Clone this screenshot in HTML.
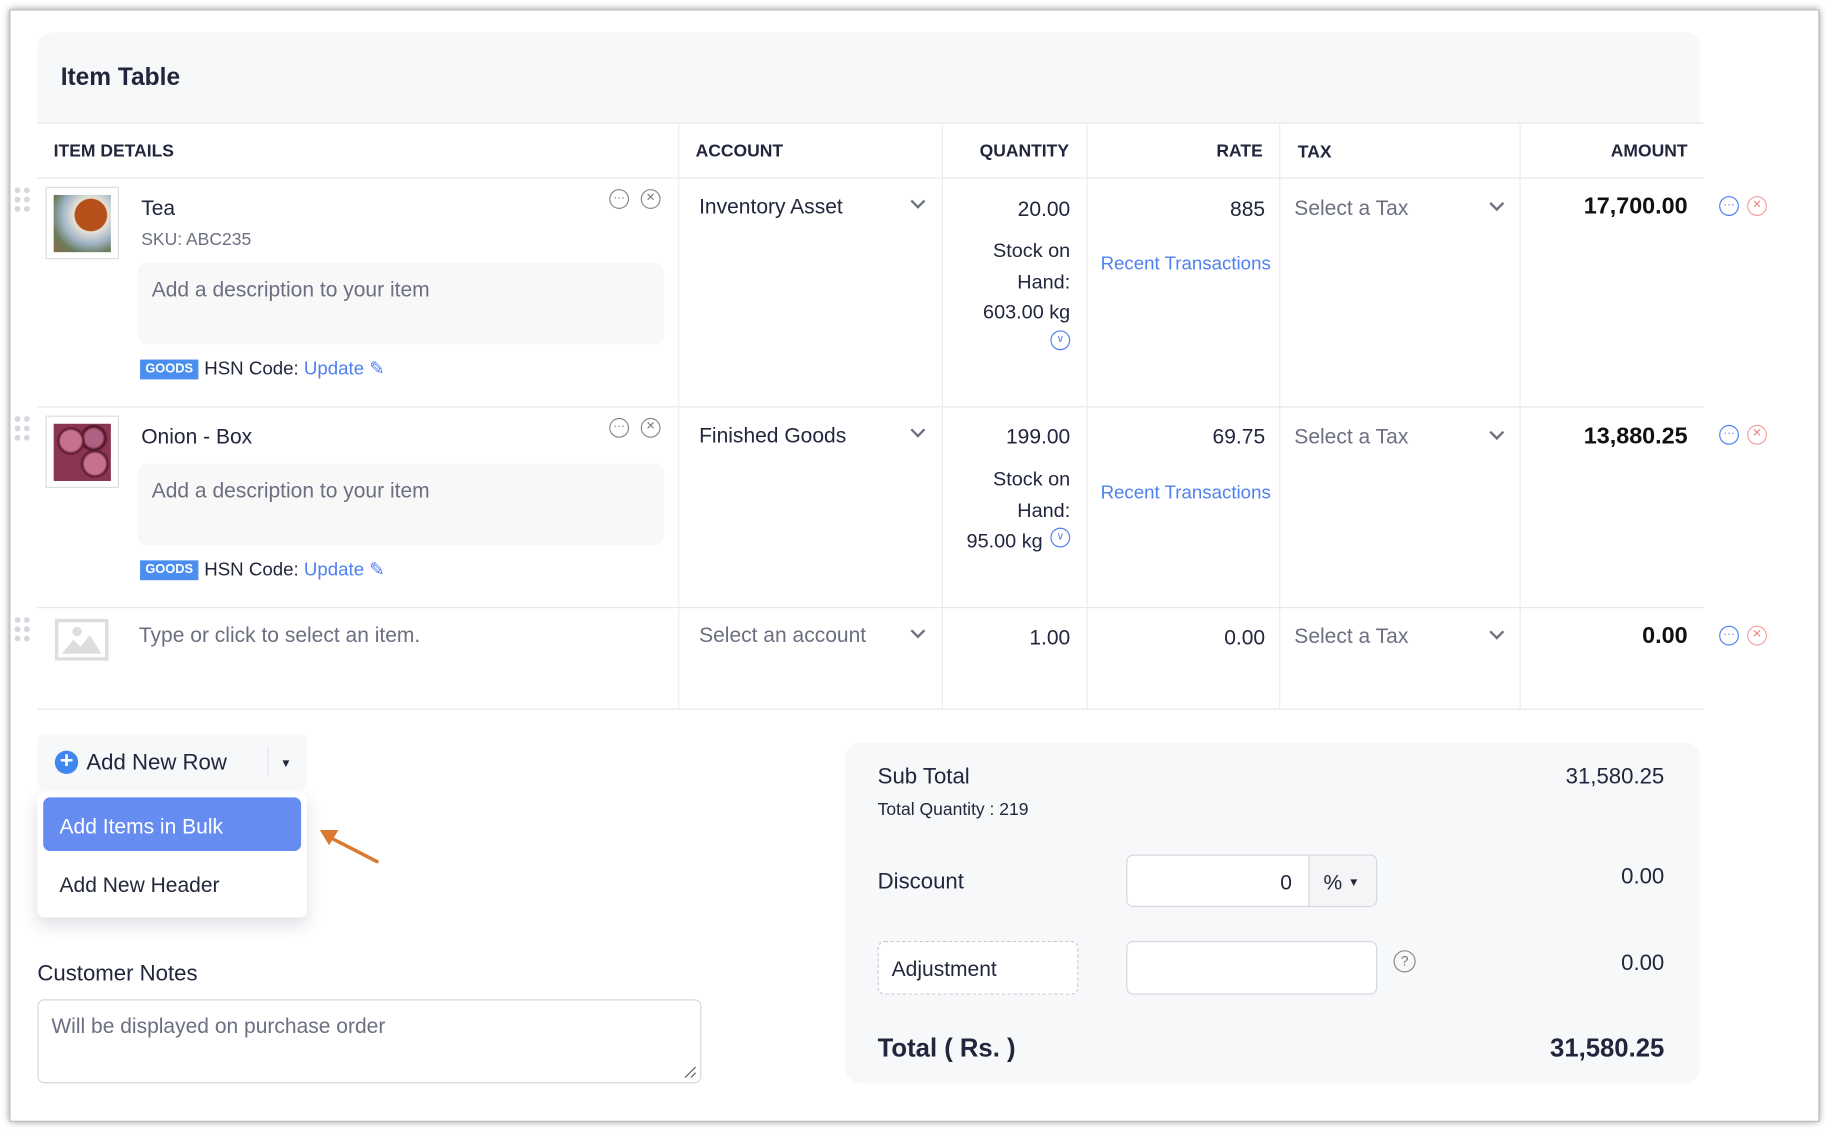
<!DOCTYPE html>
<html><head><meta charset="utf-8"><style>
*{box-sizing:border-box;margin:0;padding:0}
html,body{width:1830px;height:1130px;overflow:hidden;background:#fff}
#s{position:absolute;left:0;top:0;width:1568px;height:968px;transform:scale(1.16709,1.1674);transform-origin:0 0;font-family:"Liberation Sans",sans-serif;color:#21263c}
.a{position:absolute}
.frame{left:8px;top:8px;width:1551px;height:953px;border:1px solid #bbb;box-shadow:0 0 6px rgba(0,0,0,.45);background:#fff}
.t{position:absolute;white-space:nowrap;margin-top:2px}
.hl{position:absolute;height:1px;background:#e6e7ec}
.vl{position:absolute;width:1px;background:#ececf0}
.hd{font-size:15px;font-weight:bold;top:119px}
.f18{font-size:18px}
.g{color:#6b6f80}
.blue{color:#4f7ff0}
.desc{position:absolute;background:#f8f8f9;border-radius:8px;left:118px;width:451px}
.goods{position:absolute;left:120px;width:50px;height:17px;background:#4a8ff0;color:#fff;font-size:11px;font-weight:bold;text-align:center;line-height:17px}
.chev{position:absolute;width:9px;height:9px;border-right:2px solid #6b6f80;border-bottom:2px solid #6b6f80;transform:rotate(45deg)}
.ic{position:absolute;width:17px;height:17px;border-radius:50%;border:1.3px solid;font-size:10px;line-height:13px;text-align:center}
</style></head><body><div id="s">
<div class="a frame"></div>
<div class="a" style="left:32px;top:28px;width:1425px;height:77px;background:#f7f8fa;border-radius:12px 12px 0 0"></div>
<div class="t" style="left:52px;top:53px;font-size:21px;font-weight:bold">Item Table</div>
<div class="hl" style="left:32px;width:1428px;top:105px"></div>
<div class="hl" style="left:32px;width:1428px;top:152px"></div>
<div class="hl" style="left:32px;width:1428px;top:348px"></div>
<div class="hl" style="left:32px;width:1428px;top:520px"></div>
<div class="hl" style="left:32px;width:1428px;top:607px"></div>
<div class="vl" style="left:581px;top:105px;height:502px"></div>
<div class="vl" style="left:807px;top:105px;height:502px"></div>
<div class="vl" style="left:931px;top:105px;height:502px"></div>
<div class="vl" style="left:1096px;top:105px;height:502px"></div>
<div class="vl" style="left:1302px;top:105px;height:502px"></div>
<div class="t hd" style="left:46px">ITEM DETAILS</div>
<div class="t hd" style="left:596px">ACCOUNT</div>
<div class="t hd" style="right:652px">QUANTITY</div>
<div class="t hd" style="right:486px">RATE</div>
<div class="t hd" style="left:1112px;top:120px">TAX</div>
<div class="t hd" style="right:122px">AMOUNT</div>

<svg class="a" style="left:12px;top:160px" width="14" height="22"><g fill="#d6d8de"><circle cx="3" cy="3" r="2.5"/><circle cx="11" cy="3" r="2.5"/><circle cx="3" cy="11" r="2.5"/><circle cx="11" cy="11" r="2.5"/><circle cx="3" cy="19" r="2.5"/><circle cx="11" cy="19" r="2.5"/></g></svg>
<svg class="a" style="left:12px;top:356px" width="14" height="22"><g fill="#d6d8de"><circle cx="3" cy="3" r="2.5"/><circle cx="11" cy="3" r="2.5"/><circle cx="3" cy="11" r="2.5"/><circle cx="11" cy="11" r="2.5"/><circle cx="3" cy="19" r="2.5"/><circle cx="11" cy="19" r="2.5"/></g></svg>
<svg class="a" style="left:12px;top:528px" width="14" height="22"><g fill="#d6d8de"><circle cx="3" cy="3" r="2.5"/><circle cx="11" cy="3" r="2.5"/><circle cx="3" cy="11" r="2.5"/><circle cx="11" cy="11" r="2.5"/><circle cx="3" cy="19" r="2.5"/><circle cx="11" cy="19" r="2.5"/></g></svg>

<div class="a" style="left:39px;top:160px;width:63px;height:62px;border:1px solid #ddd;padding:6px">
<div style="width:49px;height:49px;background:radial-gradient(circle at 65% 35%,#b5501a 0 30%,#e7e2d8 32%,#9fb3c4 55%,#6a7b5a 75%,#8a6a45)"></div></div>
<div class="t f18" style="left:121px;top:166px">Tea</div>
<div class="t g" style="left:121px;top:195px;font-size:15px">SKU: ABC235</div>
<div class="desc" style="top:225px;height:70px"></div>
<div class="t f18 g" style="left:130px;top:236px">Add a description to your item</div>
<div class="goods" style="top:308px">GOODS</div>
<div class="t" style="left:175px;top:306px;font-size:16px;margin-top:0">HSN Code: <span class="blue">Update ✎</span></div>
<div class="ic" style="left:522px;top:162px;color:#777;border-color:#888">···</div>
<div class="ic" style="left:549px;top:162px;color:#777;border-color:#888">✕</div>
<div class="t f18" style="left:599px;top:165px">Inventory Asset</div>
<div class="chev" style="left:782px;top:168px"></div>
<div class="t f18" style="right:651px;top:167px">20.00</div>
<div class="t" style="right:651px;top:200px;font-size:17px;text-align:right;line-height:26.5px">Stock on<br>Hand:<br>603.00 kg</div>
<div class="ic" style="left:900px;top:283px;color:#4f7ff0;border-color:#4f7ff0;font-size:9px">∨</div>
<div class="t f18" style="right:484px;top:167px">885</div>
<div class="t blue" style="left:943px;top:216px;font-size:16px">Recent Transactions</div>
<div class="t f18 g" style="left:1109px;top:166px">Select a Tax</div>
<div class="chev" style="left:1278px;top:170px"></div>
<div class="t" style="right:122px;top:164px;font-size:20px;font-weight:bold;color:#111">17,700.00</div>
<div class="ic" style="left:1473px;top:168px;color:#4f7ff0;border-color:#4f7ff0">···</div>
<div class="ic" style="left:1497px;top:168px;color:#f08080;border-color:#f4a0a0">✕</div>

<div class="a" style="left:39px;top:356px;width:63px;height:62px;border:1px solid #ddd;padding:6px">
<div style="width:49px;height:49px;background:radial-gradient(circle at 30% 30%,#c7708f 0 18%,#5a1a2c 22%,transparent 26%),radial-gradient(circle at 72% 70%,#c7708f 0 18%,#5a1a2c 22%,transparent 26%),radial-gradient(circle at 70% 25%,#b06080 0 15%,#4a1020 20%,transparent 24%),#8a3552"></div></div>
<div class="t f18" style="left:121px;top:362px">Onion - Box</div>
<div class="desc" style="top:397px;height:70px"></div>
<div class="t f18 g" style="left:130px;top:408px">Add a description to your item</div>
<div class="goods" style="top:480px">GOODS</div>
<div class="t" style="left:175px;top:478px;font-size:16px;margin-top:0">HSN Code: <span class="blue">Update ✎</span></div>
<div class="ic" style="left:522px;top:358px;color:#777;border-color:#888">···</div>
<div class="ic" style="left:549px;top:358px;color:#777;border-color:#888">✕</div>
<div class="t f18" style="left:599px;top:361px">Finished Goods</div>
<div class="chev" style="left:782px;top:364px"></div>
<div class="t f18" style="right:651px;top:362px">199.00</div>
<div class="t" style="right:651px;top:396px;font-size:17px;text-align:right;line-height:26.5px">Stock on<br>Hand:<br>95.00 kg&nbsp;&nbsp;&nbsp;&nbsp;&nbsp;</div>
<div class="ic" style="left:900px;top:452px;color:#4f7ff0;border-color:#4f7ff0;font-size:9px">∨</div>
<div class="t f18" style="right:484px;top:362px">69.75</div>
<div class="t blue" style="left:943px;top:412px;font-size:16px">Recent Transactions</div>
<div class="t f18 g" style="left:1109px;top:362px">Select a Tax</div>
<div class="chev" style="left:1278px;top:366px"></div>
<div class="t" style="right:122px;top:361px;font-size:20px;font-weight:bold;color:#111">13,880.25</div>
<div class="ic" style="left:1473px;top:364px;color:#4f7ff0;border-color:#4f7ff0">···</div>
<div class="ic" style="left:1497px;top:364px;color:#f08080;border-color:#f4a0a0">✕</div>

<svg class="a" style="left:47px;top:530px" width="46" height="36"><rect x="1.5" y="1.5" width="43" height="33" fill="#fff" stroke="#ddd" stroke-width="3"/><path d="M6 30 L16 18 L22 24 L30 14 L40 30 Z" fill="#ddd"/><circle cx="19" cy="11" r="4" fill="#ddd"/></svg>
<div class="t f18 g" style="left:119px;top:532px">Type or click to select an item.</div>
<div class="t f18 g" style="left:599px;top:532px">Select an account</div>
<div class="chev" style="left:782px;top:536px"></div>
<div class="t f18" style="right:651px;top:534px">1.00</div>
<div class="t f18" style="right:484px;top:534px">0.00</div>
<div class="t f18 g" style="left:1109px;top:533px">Select a Tax</div>
<div class="chev" style="left:1278px;top:537px"></div>
<div class="t" style="right:122px;top:532px;font-size:20px;font-weight:bold;color:#111">0.00</div>
<div class="ic" style="left:1473px;top:536px;color:#4f7ff0;border-color:#4f7ff0">···</div>
<div class="ic" style="left:1497px;top:536px;color:#f08080;border-color:#f4a0a0">✕</div>

<div class="a" style="left:32px;top:629px;width:231px;height:47px;background:#f7f8fa;border-radius:6px"></div>
<div class="a" style="left:47px;top:643px;width:20px;height:20px;border-radius:50%;background:#3f86ee;color:#fff;font-size:20px;line-height:19px;text-align:center;font-weight:bold">+</div>
<div class="t" style="left:74px;top:641px;font-size:19px">Add New Row</div>
<div class="vl" style="left:229px;top:640px;height:25px;background:#e6e7ec"></div>
<div class="t" style="left:240px;top:647px;font-size:10px">▼</div>
<div class="a" style="left:32px;top:679px;width:231px;height:107px;background:#fff;border-radius:6px;box-shadow:0 6px 14px rgba(40,40,80,.15)"></div>
<div class="a" style="left:37px;top:683px;width:221px;height:46px;background:#678cf1;border-radius:6px"></div>
<div class="t" style="left:51px;top:696px;font-size:18px;color:#fff">Add Items in Bulk</div>
<div class="t" style="left:51px;top:746px;font-size:18px">Add New Header</div>
<svg class="a" style="left:270px;top:705px" width="60" height="40"><path d="M53 33 L10 11" stroke="#d97a30" stroke-width="3" stroke-linecap="round"/><path d="M4 6 L20 6 L12 19 Z" fill="#d97a30"/></svg>
<div class="t" style="left:32px;top:822px;font-size:19px">Customer Notes</div>
<div class="a" style="left:32px;top:856px;width:569px;height:72px;border:1px solid #d5d7e0;border-radius:6px"></div>
<div class="t f18 g" style="left:44px;top:867px">Will be displayed on purchase order</div>
<svg class="a" style="left:585px;top:912px" width="12" height="12"><path d="M2 11 L11 2 M7 11 L11 7" stroke="#555" stroke-width="1"/></svg>

<div class="a" style="left:724px;top:636px;width:733px;height:292px;background:#f7f8fa;border-radius:14px"></div>
<div class="t" style="left:752px;top:653px;font-size:19px">Sub Total</div>
<div class="t" style="left:752px;top:683px;font-size:15px">Total Quantity : 219</div>
<div class="t" style="right:142px;top:653px;font-size:19px">31,580.25</div>
<div class="t" style="left:752px;top:743px;font-size:19px">Discount</div>
<div class="a" style="left:965px;top:732px;width:215px;height:45px;border:1px solid #d5d7e0;border-radius:6px;background:#fff;overflow:hidden"><div style="position:absolute;left:155px;top:0;width:60px;height:45px;background:#f5f5f7;border-left:1px solid #d5d7e0"></div></div>
<div class="t" style="left:1097px;top:744px;font-size:18px">0</div>
<div class="t" style="left:1134px;top:744px;font-size:18px">% <span style="font-size:10px;vertical-align:3px">▼</span></div>
<div class="t" style="right:142px;top:739px;font-size:19px">0.00</div>
<div class="a" style="left:752px;top:806px;width:172px;height:46px;border:1px dashed #c8cad3;border-radius:6px;background:#fff"></div>
<div class="t" style="left:764px;top:818px;font-size:18px">Adjustment</div>
<div class="a" style="left:965px;top:806px;width:215px;height:46px;border:1px solid #d5d7e0;border-radius:6px;background:#fff"></div>
<div class="ic" style="left:1194px;top:814px;width:19px;height:19px;color:#777;border-color:#888;font-size:12px;line-height:16px">?</div>
<div class="t" style="right:142px;top:813px;font-size:19px">0.00</div>
<div class="t" style="left:752px;top:883px;font-size:22px;font-weight:bold">Total ( Rs. )</div>
<div class="t" style="right:142px;top:883px;font-size:22px;font-weight:bold">31,580.25</div>
</div></body></html>
